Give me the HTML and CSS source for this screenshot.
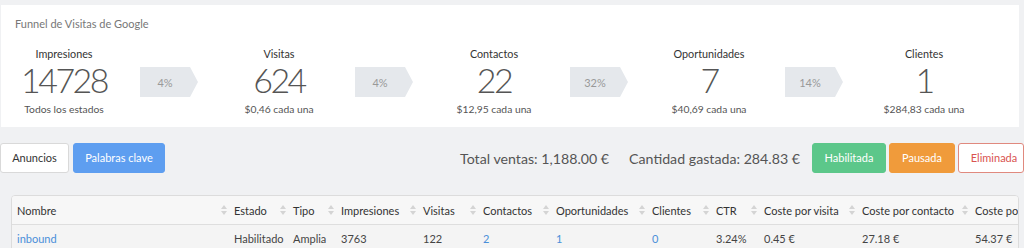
FILE: index.html
```html
<!DOCTYPE html>
<html lang="es">
<head>
<meta charset="utf-8">
<title>Funnel de Visitas de Google</title>
<link rel="stylesheet" href="styles.css">
</head>
<body>
<section class="funnel">
  <h2 class="funnel-title">Funnel de Visitas de Google</h2>
  <div class="stages">
    <div class="stage">
      <div class="stage-label">Impresiones</div>
      <div class="stage-value">14728</div>
      <div class="stage-sub">Todos los estados</div>
    </div>
    <div class="rate"><span>4%</span></div>
    <div class="stage">
      <div class="stage-label">Visitas</div>
      <div class="stage-value">624</div>
      <div class="stage-sub">$0,46 cada una</div>
    </div>
    <div class="rate"><span>4%</span></div>
    <div class="stage">
      <div class="stage-label">Contactos</div>
      <div class="stage-value">22</div>
      <div class="stage-sub">$12,95 cada una</div>
    </div>
    <div class="rate"><span>32%</span></div>
    <div class="stage">
      <div class="stage-label">Oportunidades</div>
      <div class="stage-value">7</div>
      <div class="stage-sub">$40,69 cada una</div>
    </div>
    <div class="rate"><span>14%</span></div>
    <div class="stage">
      <div class="stage-label">Clientes</div>
      <div class="stage-value">1</div>
      <div class="stage-sub">$284,83 cada una</div>
    </div>
  </div>
</section>

<div class="toolbar">
  <button class="btn btn-default">Anuncios</button>
  <button class="btn btn-primary">Palabras clave</button>
  <div class="stats">
    <span class="stat">Total ventas: 1,188.00 €</span>
    <span class="stat">Cantidad gastada: 284.83 €</span>
  </div>
  <div class="filters">
    <button class="btn btn-success">Habilitada</button>
    <button class="btn btn-warning">Pausada</button>
    <button class="btn btn-danger-outline">Eliminada</button>
  </div>
</div>

<div class="table-card">
  <div class="grid head">
    <div class="cell">Nombre<svg class="sort" viewBox="0 0 6 10"><path d="M3 0 L6 4 L0 4 Z M3 10 L6 6 L0 6 Z"/></svg></div>
    <div class="cell">Estado<svg class="sort" viewBox="0 0 6 10"><path d="M3 0 L6 4 L0 4 Z M3 10 L6 6 L0 6 Z"/></svg></div>
    <div class="cell">Tipo<svg class="sort" viewBox="0 0 6 10"><path d="M3 0 L6 4 L0 4 Z M3 10 L6 6 L0 6 Z"/></svg></div>
    <div class="cell">Impresiones<svg class="sort" viewBox="0 0 6 10"><path d="M3 0 L6 4 L0 4 Z M3 10 L6 6 L0 6 Z"/></svg></div>
    <div class="cell">Visitas<svg class="sort" viewBox="0 0 6 10"><path d="M3 0 L6 4 L0 4 Z M3 10 L6 6 L0 6 Z"/></svg></div>
    <div class="cell">Contactos<svg class="sort" viewBox="0 0 6 10"><path d="M3 0 L6 4 L0 4 Z M3 10 L6 6 L0 6 Z"/></svg></div>
    <div class="cell">Oportunidades<svg class="sort" viewBox="0 0 6 10"><path d="M3 0 L6 4 L0 4 Z M3 10 L6 6 L0 6 Z"/></svg></div>
    <div class="cell">Clientes<svg class="sort" viewBox="0 0 6 10"><path d="M3 0 L6 4 L0 4 Z M3 10 L6 6 L0 6 Z"/></svg></div>
    <div class="cell">CTR<svg class="sort" viewBox="0 0 6 10"><path d="M3 0 L6 4 L0 4 Z M3 10 L6 6 L0 6 Z"/></svg></div>
    <div class="cell">Coste por visita<svg class="sort" viewBox="0 0 6 10"><path d="M3 0 L6 4 L0 4 Z M3 10 L6 6 L0 6 Z"/></svg></div>
    <div class="cell">Coste por contacto<svg class="sort" viewBox="0 0 6 10"><path d="M3 0 L6 4 L0 4 Z M3 10 L6 6 L0 6 Z"/></svg></div>
    <div class="cell">Coste por oportunidad<svg class="sort" viewBox="0 0 6 10"><path d="M3 0 L6 4 L0 4 Z M3 10 L6 6 L0 6 Z"/></svg></div>
  </div>
  <div class="grid row">
    <div class="cell"><a class="link" href="#">inbound</a></div>
    <div class="cell">Habilitado</div>
    <div class="cell">Amplia</div>
    <div class="cell">3763</div>
    <div class="cell">122</div>
    <div class="cell"><a class="link" href="#">2</a></div>
    <div class="cell"><a class="link" href="#">1</a></div>
    <div class="cell"><a class="link" href="#">0</a></div>
    <div class="cell">3.24%</div>
    <div class="cell">0.45 €</div>
    <div class="cell">27.18 €</div>
    <div class="cell">54.37 €</div>
  </div>
</div>
</body>
</html>
```

FILE: styles.css
```css
* { box-sizing: border-box; }

html, body {
  margin: 0;
  padding: 0;
}

body {
  width: 1024px;
  height: 248px;
  overflow: hidden;
  background: #f0f1f3;
  font-family: Lato, "Open Sans", sans-serif;
  color: #444;
}

/* ---------- Funnel card ---------- */
.funnel {
  margin: 5px 5px 0 1px;
  height: 122px;
  background: #ffffff;
  padding-top: 12px;
}

.funnel-title {
  margin: 0 0 17px 14px;
  font-size: 11px;
  line-height: 14px;
  font-weight: 400;
  color: #777;
}

.stages {
  display: flex;
  align-items: flex-start;
}

.stage {
  width: 126px;
  flex: none;
  text-align: center;
}

.stage-label {
  font-size: 10.8px;
  line-height: 12px;
  color: #333;
}

.stage-value {
  font-size: 34px;
  line-height: 40px;
  font-weight: 300;
  letter-spacing: -2.5px;
  color: #555;
}

.stage-sub {
  margin-top: 2px;
  font-size: 10.3px;
  line-height: 14px;
  color: #555;
}

.rate {
  flex: none;
  width: 58px;
  height: 30px;
  margin: 19px 18px 0 13px;
  background: #e5e8ec;
  clip-path: polygon(0 0, 50px 0, 58px 50%, 50px 100%, 0 100%);
  display: flex;
  align-items: center;
}

.rate span {
  width: 50px;
  text-align: center;
  font-size: 11px;
  color: #999;
}

/* ---------- Toolbar ---------- */
.toolbar {
  display: flex;
  align-items: center;
  margin-top: 16px;
  height: 30px;
}

.btn {
  height: 30px;
  padding: 0;
  border: 1px solid transparent;
  border-radius: 3px;
  font-family: Lato, "Open Sans", sans-serif;
  font-size: 11px;
  line-height: 28px;
  text-align: center;
  flex: none;
}

.btn-default {
  width: 69px;
  background: #fff;
  border-color: #d9d9d9;
  color: #333;
}

.btn-primary {
  width: 92px;
  margin-left: 4px;
  background: #5e9ef0;
  border-color: #5e9ef0;
  color: #fff;
}

.stats {
  margin-left: auto;
  display: flex;
  gap: 20px;
  font-size: 14.2px;
  color: #555;
}

.filters {
  display: flex;
  gap: 3px;
  margin-left: 12px;
}

.btn-success {
  width: 74px;
  background: #5cc78a;
  border-color: #5cc78a;
  color: #fff;
}

.btn-warning {
  width: 66px;
  background: #f09b3b;
  border-color: #f09b3b;
  color: #fff;
}

.btn-danger-outline {
  width: 66px;
  padding-left: 6px;
  background: #fff;
  border-color: #e0897e;
  color: #d9534f;
}

/* ---------- Table ---------- */
.table-card {
  margin: 22px 5px 0 11px;
  border: 1px solid #dcdcdc;
  border-radius: 4px 4px 0 0;
  background: #f7f7f7;
  overflow: hidden;
}

.grid {
  display: grid;
  grid-template-columns: 217px 59px 48px 82px 60px 73px 96px 64px 48px 98px 113px 140px;
  width: 1098px;
}

.head {
  height: 29px;
  border-bottom: 1px solid #dedede;
  background: #f7f7f7;
}

.row {
  height: 26px;
  background: #f4f4f4;
}

.cell {
  display: flex;
  align-items: center;
  justify-content: space-between;
  padding: 0 2px 0 5px;
  font-size: 11px;
  white-space: nowrap;
  overflow: hidden;
}

.head .cell {
  color: #333;
}

.row .cell {
  color: #444;
}

.sort {
  flex: none;
  width: 6px;
  height: 10px;
  fill: #d4d4d4;
}

.link {
  color: #4a8fd9;
  text-decoration: none;
}
```
